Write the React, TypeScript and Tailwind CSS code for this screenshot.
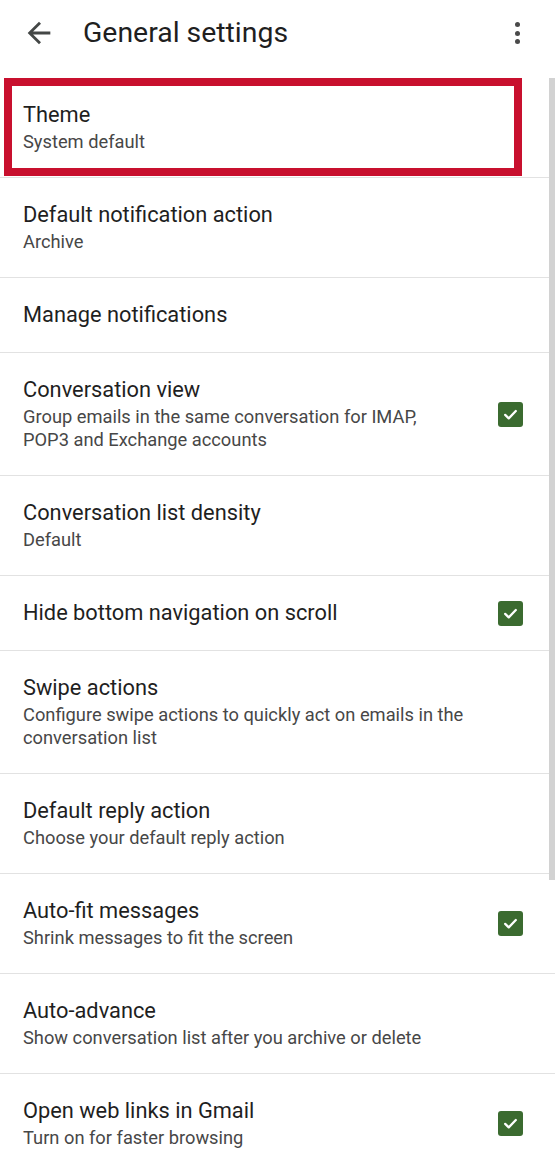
import { ReactNode } from 'react';

interface SettingRow {
  title: string;
  lines?: string[];
  checked?: boolean;
}

const rows: SettingRow[] = [
  { title: 'Theme', lines: ['System default'] },
  { title: 'Default notification action', lines: ['Archive'] },
  { title: 'Manage notifications' },
  {
    title: 'Conversation view',
    lines: ['Group emails in the same conversation for IMAP,', 'POP3 and Exchange accounts'],
    checked: true,
  },
  { title: 'Conversation list density', lines: ['Default'] },
  { title: 'Hide bottom navigation on scroll', checked: true },
  {
    title: 'Swipe actions',
    lines: ['Configure swipe actions to quickly act on emails in the', 'conversation list'],
  },
  { title: 'Default reply action', lines: ['Choose your default reply action'] },
  { title: 'Auto-fit messages', lines: ['Shrink messages to fit the screen'], checked: true },
  { title: 'Auto-advance', lines: ['Show conversation list after you archive or delete'] },
  { title: 'Open web links in Gmail', lines: ['Turn on for faster browsing'], checked: true },
];

function CheckBox() {
  return (
    <div className="w-[25px] h-[25px] rounded-[3px] bg-[#3b6b30] flex items-center justify-center shrink-0">
      <svg width="17" height="17" viewBox="0 0 24 24" fill="none">
        <path d="M4.5 12.5l5 5L19.5 7" stroke="#ffffff" strokeWidth="3.2" strokeLinecap="round" strokeLinejoin="round" />
      </svg>
    </div>
  );
}

function Row({ row, children }: { row: SettingRow; children?: ReactNode }) {
  return (
    <div className="relative flex items-center border-b border-[#e2e2e2] pl-[23px] pr-[32px] py-[24px]">
      <div className="flex-1 min-w-0">
        <div className="text-[21.8px] leading-[26px] text-[#1f1f1f]">{row.title}</div>
        {row.lines && (
          <div className="mt-[2px] text-[18.3px] leading-[23px] text-[#474747]">
            {row.lines.map((line) => (
              <div key={line} className="whitespace-nowrap">{line}</div>
            ))}
          </div>
        )}
      </div>
      {row.checked && <CheckBox />}
      {children}
    </div>
  );
}

export default function App() {
  return (
    <div className="relative min-h-screen w-[555px] bg-white font-['Roboto','Noto_Sans',sans-serif] overflow-hidden">
      <div className="h-[78px] flex items-center pl-[22px] pr-[35px] pb-[12px]">
        <svg width="34" height="34" viewBox="0 0 24 24" className="shrink-0">
          <path d="M20 11H7.83l5.59-5.59L12 4l-8 8 8 8 1.41-1.41L7.83 13H20v-2z" fill="#444746" />
        </svg>
        <h1 className="ml-[27px] flex-1 text-[28.4px] text-[#1f1f1f] leading-none">General settings</h1>
        <div className="flex flex-col items-center gap-[3.5px]">
          <span className="w-[5px] h-[5px] rounded-full bg-[#4a4a4a]" />
          <span className="w-[5px] h-[5px] rounded-full bg-[#4a4a4a]" />
          <span className="w-[5px] h-[5px] rounded-full bg-[#4a4a4a]" />
        </div>
      </div>

      <div>
        {rows.map((row, i) => (
          <Row key={row.title} row={row}>
            {i === 0 && (
              <div className="absolute left-[4px] top-0 w-[518px] h-[98px] border-[8px] border-[#c8102e]" />
            )}
          </Row>
        ))}
      </div>

      <div className="absolute right-0 top-[78px] w-[6px] h-[802px] bg-[#d2d2d2]" />
    </div>
  );
}
